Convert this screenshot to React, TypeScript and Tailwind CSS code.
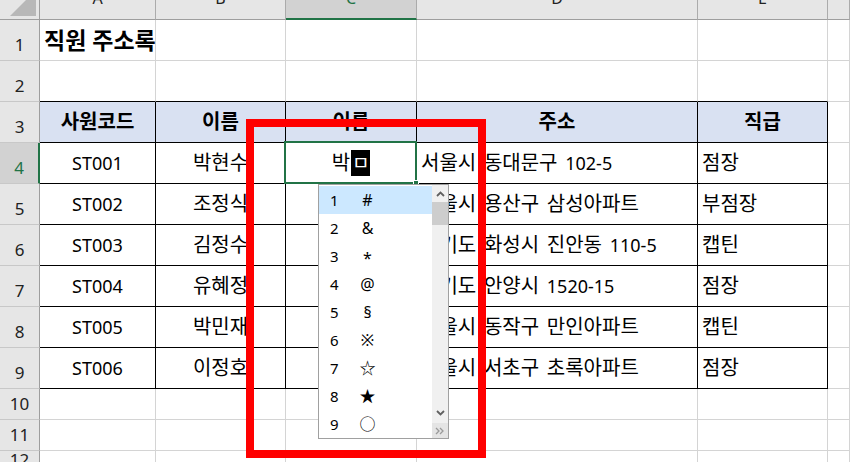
import React from 'react';

const codes = ['ST001', 'ST002', 'ST003', 'ST004', 'ST005', 'ST006'];
const names = ['박현수', '조정식', '김정수', '유혜정', '박민재', '이정호'];
const addrs = [
  '서울시 동대문구 102-5',
  '서울시 용산구 삼성아파트',
  '경기도 화성시 진안동 110-5',
  '경기도 안양시 1520-15',
  '서울시 동작구 만인아파트',
  '서울시 서초구 초록아파트',
];
const ranks = ['점장', '부점장', '캡틴', '점장', '캡틴', '점장'];
const headers = ['사원코드', '이름', '이름', '주소', '직급'];
const letters = ['A', 'B', 'C', 'D', 'E', ''];
const rows = [1, 2, 3, 4, 5, 6, 7, 8, 9, 10, 11, 12];
const cands = ['#', '&', '*', '@', '§', '※', '☆', '★', '○'];

function Mixed({ text }: { text: string }) {
  const parts = text.match(/[\uAC00-\uD7A3\u3131-\u318E ]+|[^\uAC00-\uD7A3\u3131-\u318E ]+/g) || [];
  return (
    <span className="leading-none [word-spacing:2.5px]">
      {parts.map((p, i) =>
        /[\uAC00-\uD7A3\u3131-\u318E ]/.test(p) ? (
          <span key={i} className="text-[20px]">
            {p}
          </span>
        ) : (
          <span key={i} className="text-[18px]">
            {p}
          </span>
        )
      )}
    </span>
  );
}

function cellBorder(r: number, c: number) {
  if (r >= 3 && r <= 9 && c <= 4) return 'border-r border-b border-black';
  if (r === 2 && c <= 4) return 'border-r border-b border-r-[#d4d4d4] border-b-black';
  return 'border-r border-b border-[#d4d4d4]';
}

function Cell({ r, c }: { r: number; c: number }) {
  const b = cellBorder(r, c);
  if (r === 1 && c === 0) {
    return (
      <div className={`${b} relative flex items-center justify-start pl-[4px] whitespace-nowrap text-[23px] font-bold leading-none text-black`}>
        직원 주소록
      </div>
    );
  }
  if (r === 3 && c <= 4) {
    return (
      <div className={`${b} flex items-center justify-center bg-[#d9e1f2] whitespace-nowrap text-[20px] font-bold leading-none text-black`}>
        {headers[c]}
      </div>
    );
  }
  if (r >= 4 && r <= 9 && c <= 4) {
    const i = r - 4;
    if (c === 2) {
      if (r === 4) {
        return (
          <div className={`${b} relative flex items-center justify-center whitespace-nowrap text-[20px] leading-none text-black`}>
            <span className="mr-px">박</span>
            <span className="inline-block h-[26px] w-[19px] bg-black text-center text-[19px] leading-[26px] text-white">ㅁ</span>
            <div className="absolute -left-[2px] -top-[2px] h-[43px] w-[133px] border-2 border-[#217346]" />
            <div className="absolute -bottom-[3px] -right-[3px] h-[6px] w-[6px] border border-white bg-[#217346]" />
          </div>
        );
      }
      return <div className={b} />;
    }
    const text = c === 0 ? codes[i] : c === 1 ? names[i] : c === 3 ? addrs[i] : ranks[i];
    const align = c <= 1 ? 'justify-center' : 'justify-start pl-[4px]';
    return (
      <div className={`${b} flex items-center ${align} whitespace-nowrap leading-none text-black`}>
        <Mixed text={text} />
      </div>
    );
  }
  return <div className={b} />;
}

function Chevron({ up }: { up: boolean }) {
  return (
    <svg width="9" height="6" viewBox="0 0 9 6">
      <path
        d={up ? 'M1 5 L4.5 1.5 L8 5' : 'M1 1 L4.5 4.5 L8 1'}
        fill="none"
        stroke="#606060"
        strokeWidth="1.8"
      />
    </svg>
  );
}

export default function App() {
  return (
    <div className="relative h-[462px] w-[850px] overflow-hidden bg-white font-['Noto_Sans','Noto_Sans_CJK_KR',sans-serif]">
      <div className="grid h-[462px] w-[850px] grid-cols-[40px_116px_130px_131px_281px_130px_1fr] grid-rows-[20px_41px_41px_41px_41px_41px_41px_41px_41px_41px_31px_31px_1fr]">
        {/* corner */}
        <div className="relative overflow-hidden border-b border-r border-b-[#9e9e9e] border-r-[#9e9e9e] bg-[#e6e6e6]">
          <svg className="absolute left-0 top-0" width="39" height="19" viewBox="0 0 39 19">
            <polygon points="10,16 36,16 36,-10" fill="#b8b8b8" />
          </svg>
        </div>
        {letters.map((l, c) =>
          c === 2 ? (
            <div
              key={l + c}
              className="flex items-start justify-center overflow-hidden border-b-2 border-r border-b-[#217346] border-r-[#ababab] bg-[#d2d2d2] text-[#217346]"
            >
              <span className="-mt-[10px] text-[16px] leading-none">{l}</span>
            </div>
          ) : (
            <div
              key={l + c}
              className="flex items-start justify-center overflow-hidden border-b border-r border-b-[#9e9e9e] border-r-[#ababab] bg-[#e6e6e6] text-[#222]"
            >
              <span className="-mt-[10px] text-[16px] leading-none">{l}</span>
            </div>
          )
        )}
        {rows.map((r) => (
          <React.Fragment key={r}>
            {r === 4 ? (
              <div className="flex items-end justify-center border-b border-r-2 border-b-[#c8c8c8] border-r-[#217346] bg-[#d2d2d2] pb-[7px] text-[17px] leading-none text-[#217346]">
                {r}
              </div>
            ) : (
              <div className="flex items-end justify-center border-b border-r border-b-[#c8c8c8] border-r-[#9e9e9e] bg-[#e6e6e6] pb-[7px] text-[17px] leading-none text-[#222]">
                {r}
              </div>
            )}
            {[0, 1, 2, 3, 4, 5].map((c) => (
              <Cell key={c} r={r} c={c} />
            ))}
          </React.Fragment>
        ))}
      </div>

      {/* IME candidate window */}
      <div className="absolute left-[318px] top-[184px] flex h-[255px] w-[131px] border border-[#a0a0a0] bg-white">
        <div className="flex flex-1 flex-col pt-px">
          {cands.map((s, i) => (
            <div
              key={i}
              className={`flex h-[28px] items-center leading-none text-black ${i === 0 ? 'bg-[#cce8ff]' : ''}`}
            >
              <span className="ml-[11px] w-[29px] text-[15px]">{i + 1}</span>
              {s === '*' ? (
                <span className="w-[17px] translate-y-[2px] text-center text-[16px]">{s}</span>
              ) : (
                <span className="w-[17px] text-center text-[16px]">{s}</span>
              )}
            </div>
          ))}
        </div>
        <div className="flex w-[16px] flex-col bg-[#f0f0f0]">
          <div className="flex h-[17px] items-center justify-center">
            <Chevron up />
          </div>
          <div className="h-[23px] bg-[#cdcdcd]" />
          <div className="flex-1" />
          <div className="flex h-[17px] items-center justify-center">
            <Chevron up={false} />
          </div>
          <div className="h-[2px]" />
          <div className="flex h-[15px] items-center justify-center bg-[#e4e4e4]">
            <svg width="10" height="8" viewBox="0 0 10 8">
              <path d="M1 1 L4 4 L1 7 M5 1 L8 4 L5 7" fill="none" stroke="#9a9a9a" strokeWidth="1.3" />
            </svg>
          </div>
        </div>
      </div>

      {/* red highlight rectangle */}
      <div className="pointer-events-none absolute left-[246px] top-[119px] h-[339px] w-[240px] border-[8px] border-[#ff0000]" />
    </div>
  );
}
